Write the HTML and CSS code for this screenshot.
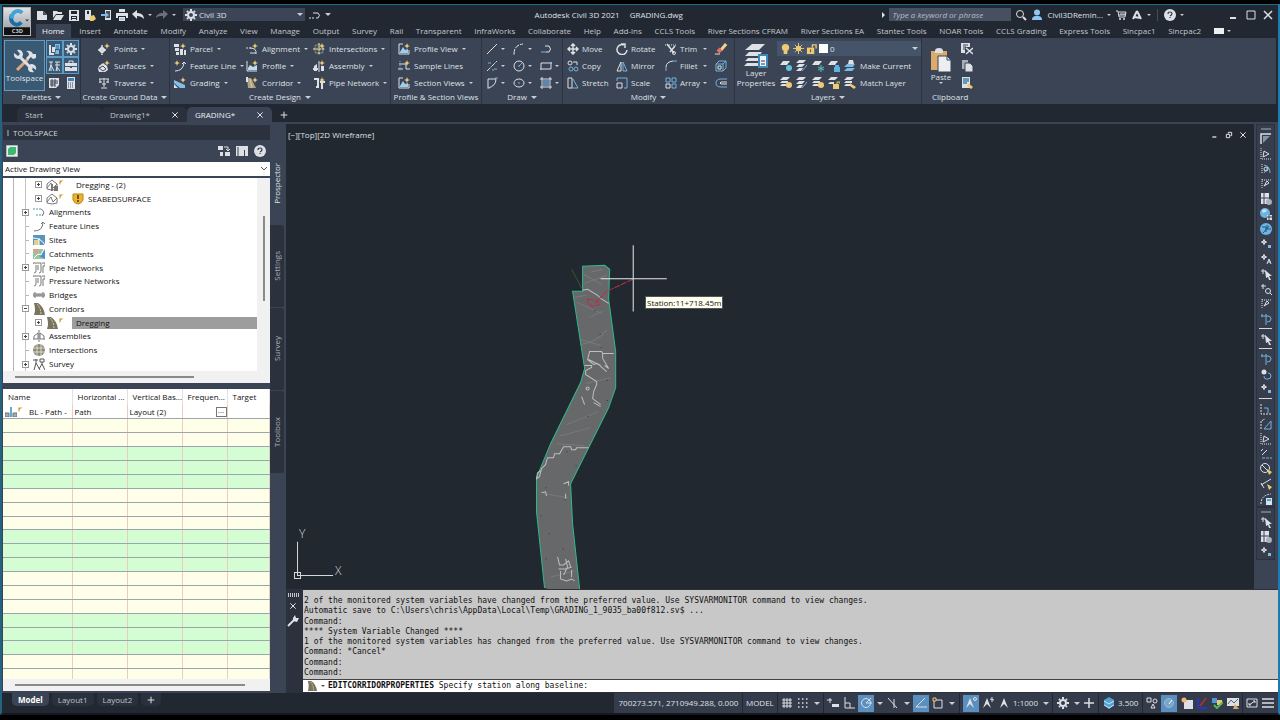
FILE: index.html
```html
<!DOCTYPE html>
<html lang="en">
<head>
    <meta charset="UTF-8">
    <title>Autodesk Civil 3D 2021 - GRADING.dwg</title>
    <link rel="stylesheet" href="styles.css">
</head>
<body>
<!-- icon sprite -->
<svg class="sprite" aria-hidden="true">
    <symbol id="new" viewBox="0 0 12 12"><path class="lt" d="M1 2h6l4 4v5H1z"/><path class="bg" d="M7 2v4h4z"/></symbol>
    <symbol id="open" viewBox="0 0 12 12"><path class="lt" d="M1 2h4l1 1h4v2H4L1 9z"/><path class="lt" d="M4 6h8l-3 5H1z"/></symbol>
    <symbol id="save" viewBox="0 0 12 12"><path class="lt" fill-rule="evenodd" d="M1 1h10v11H1zM3 2v3h6V2zM3 7v4h6V7z"/><path class="lt" d="M4 8h4v1H4zM4 10h4v1H4z"/></symbol>
    <symbol id="saveas" viewBox="0 0 12 12"><path class="lt" fill-rule="evenodd" d="M1 1h6v10H1zM3 2v3h2V2z"/><path class="yf" d="M6 7l4-1 2 4-3 2H6z"/></symbol>
    <symbol id="web" viewBox="0 0 12 12"><path class="lt" d="M5 1h6v10H5z"/><path class="bg" d="M6 2h4v7H6z"/><path class="bf" d="M1 5h4V3l4 3-4 3V7H1z"/></symbol>
    <symbol id="plot" viewBox="0 0 12 12"><path class="lt" d="M3 0h6v3H3zM0 4h12v5h-2V7H2v2H0zM3 8h6v4H3z"/><path class="bs" d="M4 10h4"/></symbol>
    <symbol id="undo" viewBox="0 0 12 12"><path class="lt" d="M0 5l5-4v3c4 0 7 2 7 6-2-2-4-3-7-3v3z"/></symbol>
    <symbol id="redo" viewBox="0 0 12 12"><path fill="#69707c" d="M12 5L7 1v3c-4 0-7 2-7 5 2-2 4-2 7-2v3z"/></symbol>
    <symbol id="gear" viewBox="0 0 12 12"><circle cx="6" cy="6" r="3" class="ls" stroke-width="2"/><path class="ls" stroke-width="2" d="M6 0v2M6 10v2M0 6h2M10 6h2M2 2l1 1M9 9l1 1M2 10l1-1M9 3l1-1"/></symbol>
    <symbol id="flow" viewBox="0 0 12 12"><path class="ls" stroke-dasharray="2 1" d="M0 9h6"/><path class="ls" d="M4 4h5q3 2 0 5H7"/></symbol>
    <symbol id="mag" viewBox="0 0 12 12"><circle cx="5" cy="5" r="3.500" class="ls"/><path class="ls" stroke-width="2" d="M8 8l3 3"/></symbol>
    <symbol id="user" viewBox="0 0 12 12"><circle cx="6" cy="3.500" r="3" fill="#8cc8f2"/><path fill="#8cc8f2" d="M1 11q0-4 4-4h2q4 0 4 4z"/></symbol>
    <symbol id="cart" viewBox="0 0 12 12"><path class="ls" d="M1 2h2l1 6h6l1-5H4M5 5h6M4 6h6"/><circle cx="5" cy="10" r="1" class="lt"/><circle cx="9" cy="10" r="1" class="lt"/></symbol>
    <symbol id="acad" viewBox="0 0 12 12"><path class="ls" stroke-width="2" d="M6 2L2 10M6 2l4 8M3 8l7 1"/></symbol>
    <symbol id="help" viewBox="0 0 12 12"><circle cx="6" cy="6" r="6" class="lt"/><path d="M4 5q0-2 2-2t2 1.500Q8 6 6 7M6 8v1" fill="none" stroke="#333b48" stroke-width="1.200"/></symbol>
    <symbol id="min" viewBox="0 0 12 12"><path class="ls" stroke-width="2" d="M2 9h6"/></symbol>
    <symbol id="max" viewBox="0 0 12 12"><path class="ls" d="M2 2h8v8H2z"/></symbol>
    <symbol id="restore" viewBox="0 0 12 12"><path class="ls" stroke-width="1.500" d="M5 4V2h5v5H8M2 5h5v5H2z"/></symbol>
    <symbol id="close" viewBox="0 0 12 12"><path class="ls" stroke-width="1.500" d="M2 2l8 8M10 2l-8 8"/></symbol>
    <symbol id="star" viewBox="0 0 12 12"><path fill="#f3d27c" d="M9 0l.8 2.200L12 3l-2.200.8L9 6l-.8-2.200L6 3l2.200-.8z"/></symbol>

    <symbol id="tools" viewBox="0 0 24 24"><path d="M4 21L15 10" stroke="#e2a77f" stroke-width="3"/><path class="ls" stroke-width="3" d="M7 8l12 12"/><path class="lt" d="M1 4l4 3 2-2-3-4q5-1 6 4 0 5-5 5-5-1-4-6zM23 21l-4-3-1 1 3 4q-5 1-6-3 0-5 4-5 5 1 4 6z"/><path class="lt" d="M13 2q5-1 7 3h3v4l-3 1-2-2-3 3-2-2 3-3q0-3-3-4z"/></symbol>
    <symbol id="prospector" viewBox="0 0 12 12"><path class="lt" d="M1 2h2v8h3v2H1zM4 4h3v5H4z"/><path class="bf" d="M7 1h5v5H7zM8 7h3v4H7z"/><path d="M8 3h3M8 5h3" stroke="#36607e"/></symbol>
    <symbol id="tripod" viewBox="0 0 12 12"><path class="ls" d="M1 2h4M3 2v3M3 5l-2 6M3 5l3 6M3 5v6M7 2h5M9 2v9M7 5h5M8 11l1-4 3 4"/></symbol>
    <symbol id="case" viewBox="0 0 12 12"><path class="ls" d="M4 3V1h4v2"/><path class="lt" d="M0 3h12v3H0zM0 7h5v1h2V7h5v4H0z"/></symbol>
    <symbol id="sheet" viewBox="0 0 12 12"><path class="lt" d="M1 1h10v7l-3 3H1z"/><path d="M2 4h8M2 6h8M2 8h5M4 2v8M7 2v8" stroke="#3b4454"/></symbol>
    <symbol id="calc" viewBox="0 0 12 12"><path class="lt" d="M2 0h8v12H2z"/><path fill="#3f83b4" d="M3 1h6v3H3z"/><path d="M3 6h6M3 8h6M3 10h6" stroke="#3b4454" stroke-dasharray="1 1"/></symbol>

    <symbol id="points" viewBox="0 0 12 12"><path class="ls" stroke-width="1.500" d="M4 4l3 3-3 3-3-3zM4 2v10M0 7h8"/><use href="#star"/></symbol>
    <symbol id="surfaces" viewBox="0 0 12 12"><path class="lt" d="M1 6l4-3 4 3 1 4-3 2H1L0 9z"/><path d="M1 8l4-2 3 3-3 2z" fill="none" stroke="#454c58"/><use href="#star"/></symbol>
    <symbol id="traverse" viewBox="0 0 12 12"><path class="ls" d="M1 2h10M6 1v9M3 11h6M2 2v4M10 2v4M1 5h3M8 5h3M4 7h4"/></symbol>
    <symbol id="parcel" viewBox="0 0 12 12"><path class="lt" d="M0 1h5v3H0zM1 5h4v3H1zM6 6h3v6H6zM10 7h2v5h-2zM2 9h3v3H2z"/><use href="#star"/></symbol>
    <symbol id="fline" viewBox="0 0 12 12"><path class="ls" d="M1 11q8 0 9-8M8 4l2-2 2 2"/><use href="#star" x="-6"/></symbol>
    <symbol id="grading" viewBox="0 0 12 12"><path class="lt" d="M0 7l4 4h-4z"/><path fill="#83bfe9" d="M0 3l11 5v3H6L0 6z"/><use href="#star"/></symbol>
    <symbol id="align" viewBox="0 0 12 12"><path class="ls" stroke-dasharray="2 1" d="M0 5h5"/><path class="ls" d="M4 5q7 0 6 6M4 10h6"/><use href="#star"/></symbol>
    <symbol id="profile" viewBox="0 0 12 12"><path class="ls" d="M1 1v10h10"/><path fill="#bcdcf0" d="M2 8l2-3 3 2 4-2v5H2z"/><use href="#star"/></symbol>
    <symbol id="corridor" viewBox="0 0 12 12"><path fill="#aaa28e" d="M1 1h4l5 10H2z"/><path d="M4 2l2 9" stroke="#e6d06b"/><path class="lt" d="M0 0h2v5H0z"/><use href="#star"/></symbol>
    <symbol id="inter" viewBox="0 0 12 12"><circle cx="6" cy="6" r="5.500" fill="#8f9185"/><path d="M4 0v12M8 0v12M0 4h12M0 8h12" stroke="#333a47"/><path d="M6 0v12M0 6h12" stroke="#ddd3a0" stroke-dasharray="2 1"/><use href="#star"/></symbol>
    <symbol id="assembly" viewBox="0 0 12 12"><path class="ls" d="M6 1v11"/><path class="lt" d="M1 6l3-2v7H1zM8 6h3v5H8zM0 8h5v2H0z"/><use href="#star"/></symbol>
    <symbol id="pipe" viewBox="0 0 12 12"><path class="ls" stroke-width="2" d="M1 2h4v8H3M9 5v7"/><path class="lt" d="M7 4h5v2H7z"/><use href="#star"/></symbol>
    <symbol id="pview" viewBox="0 0 12 12"><path class="ls" d="M1 1v10h10V7M1 1h4"/><path fill="#9fcdec" d="M2 9l3-5 2 3 3-1v4H2z"/><use href="#star"/></symbol>
    <symbol id="sample" viewBox="0 0 12 12"><path class="ls" d="M1 4h7v5h4M0 9h5"/><path class="bs" stroke-dasharray="1 1" d="M2 1v10"/><use href="#star"/></symbol>

    <symbol id="line" viewBox="0 0 12 12"><path class="ls" d="M1 11L11 1"/></symbol>
    <symbol id="arc" viewBox="0 0 12 12"><path class="ls" stroke-dasharray="5 1" d="M1 11Q1 2 10 1"/><path class="bs" d="M1 10v2"/></symbol>
    <symbol id="pline" viewBox="0 0 12 12"><path class="ls" d="M5 3h4q3 3 0 6H6"/><path class="bs" d="M1 9h5"/></symbol>
    <symbol id="xline" viewBox="0 0 12 12"><path class="ls" stroke-dasharray="5 1" d="M1 11L11 1"/><path class="bs" d="M2 3h3M8 9h3M6 10h2"/></symbol>
    <symbol id="circle" viewBox="0 0 12 12"><circle class="ls" cx="6" cy="6" r="5"/><path class="bs" d="M6 6l3-3M5 6h2"/></symbol>
    <symbol id="rect" viewBox="0 0 12 12"><path class="ls" d="M1 3h10v6H1z"/><path class="bf" d="M0 8h2v2H0zM10 2h2v2h-2z"/></symbol>
    <symbol id="spline" viewBox="0 0 12 12"><path class="ls" d="M2 11V2h8Q10 9 2 11"/><path class="bs" d="M9 1h3M1 11h3"/></symbol>
    <symbol id="ellipse" viewBox="0 0 12 12"><ellipse class="ls" cx="6" cy="6" rx="5" ry="4"/><path class="bs" d="M5 6h2"/></symbol>
    <symbol id="hatch" viewBox="0 0 12 12"><path class="ls" d="M2 0v12M10 0v12M0 2h12M0 10h12"/><path fill="#5d87ab" d="M3 3h6v6H3z"/></symbol>
    <symbol id="move" viewBox="0 0 12 12"><path class="ls" stroke-width="1.500" d="M6 1v10M1 6h10M4 3l2-2 2 2M4 9l2 2 2-2M3 4L1 6l2 2M9 4l2 2-2 2"/></symbol>
    <symbol id="copy" viewBox="0 0 12 12"><circle class="ls" cx="3" cy="3" r="2"/><path class="ls" d="M6 2h4v3"/><circle class="bs" cx="4" cy="9" r="2"/><circle class="bs" cx="9" cy="9" r="2"/></symbol>
    <symbol id="stretch" viewBox="0 0 12 12"><path class="ls" d="M1 1h4v10H1z"/><path class="bs" d="M6 2l5 9H5"/></symbol>
    <symbol id="rotate" viewBox="0 0 12 12"><path class="ls" stroke-width="1.500" d="M8 2a5 5 0 1 0 3 5M5 1h4v4"/></symbol>
    <symbol id="mirror" viewBox="0 0 12 12"><path class="ls" d="M5 2v9H1z"/><path class="bs" d="M7 2v9h4z"/></symbol>
    <symbol id="scale" viewBox="0 0 12 12"><path class="ls" d="M1 11V6h5v5z"/><path class="bs" d="M1 4V1h10v10H8"/></symbol>
    <symbol id="trim" viewBox="0 0 12 12"><path class="ls" stroke-width="1.500" d="M2 1l7 9M10 3L5 9"/><circle class="ls" cx="9" cy="10" r="1.500"/><path class="ls" stroke-dasharray="1 1" d="M0 2h12"/></symbol>
    <symbol id="fillet" viewBox="0 0 12 12"><path class="bs" d="M1 11V7"/><path class="ls" d="M1 7q0-5 7-6"/><path class="bs" d="M8 1h4"/></symbol>
    <symbol id="array" viewBox="0 0 12 12"><path class="bs" d="M1 1h4v4H1zM7 1h4v4H7zM7 7h4v4H7z"/><path class="ls" d="M1 7h4v4H1z"/></symbol>
    <symbol id="erase" viewBox="0 0 12 12"><path d="M11 1L6 7" stroke="#f0d08a" stroke-width="3"/><path d="M6 6L3 9" stroke="#e37060" stroke-width="4"/><path class="ls" d="M0 11h5"/></symbol>
    <symbol id="explode" viewBox="0 0 12 12"><path class="bs" d="M1 4h7v7H1zM1 4l3-3h7v7l-3 3M8 4l3-3"/><path class="ls" d="M3 6h3v3H3z"/></symbol>
    <symbol id="offset" viewBox="0 0 12 12"><path class="bs" d="M12 2H6Q1 2 1 6t5 4h6"/><path class="ls" d="M12 5H6q-2 1 0 2h6"/></symbol>

    <symbol id="layers" viewBox="0 0 24 24"><path class="lt" d="M8 0h13l-6 6H1z"/><path class="lt" d="M5 8h13l-3 4H1zM4 14h10v3H1z"/><path class="lt" d="M3 19h11v3H0z"/><path fill="#eef5fa" stroke="#3d86b9" stroke-width="2" d="M15 11h8v12h-8z"/><path d="M17 17h4M17 20h4" stroke="#333b48"/></symbol>
    <symbol id="bulb" viewBox="0 0 12 12"><circle cx="6" cy="5" r="4" class="yf"/><path class="yf" d="M4 8h4v4H4z"/></symbol>
    <symbol id="sun" viewBox="0 0 12 12"><circle cx="6" cy="6" r="3" class="yf"/><path d="M6 0v12M0 6h12M2 2l8 8M10 2l-8 8" stroke="#efc872"/></symbol>
    <symbol id="lock" viewBox="0 0 12 12"><path class="yf" d="M1 5h8v7H1z"/><path d="M7 5V2h4v4" fill="none" stroke="#efc872" stroke-width="1.500"/><path d="M5 7v3" stroke="#3b4454"/></symbol>
    <symbol id="l1" viewBox="0 0 12 12"><path class="lt" d="M3 1h7L7 5H0z"/><circle cx="9" cy="8" r="3" fill="#63c3dd"/></symbol>
    <symbol id="l2" viewBox="0 0 12 12"><path class="lt" d="M3 0h7L7 3H0zM3 4h6L6 7H0zM3 8h4l-2 3H0z"/><path class="bs" d="M6 11l5-6"/></symbol>
    <symbol id="l3" viewBox="0 0 12 12"><path class="lt" d="M3 1h7L7 5H0z"/><path d="M9 5v7M6 7l6 3M12 7l-6 3" stroke="#52c7c0"/></symbol>
    <symbol id="l4" viewBox="0 0 12 12"><path class="lt" d="M3 1h7L7 5H0z"/><path fill="#5cb3e4" d="M6 7h6v5H6zM7 5h4v2H7z"/></symbol>
    <symbol id="l5" viewBox="0 0 12 12"><path class="lt" d="M3 0h7L7 3H0zM2 4h6v2H0zM2 7h5v2H0z"/><circle cx="9" cy="8" r="3" class="yf"/></symbol>
    <symbol id="l6" viewBox="0 0 12 12"><path class="lt" d="M3 0h7L7 3H0zM2 5h4v2H0z"/><path class="yf" d="M5 7h6v5H5z"/><path d="M9 7V5h3v2" fill="none" stroke="#efc872"/></symbol>
    <symbol id="mkcur" viewBox="0 0 12 12"><path class="bf" d="M3 4h8l-2 3H0zM3 8h8l-3 3H0z"/><path class="lt" d="M5 0h4l1 4H4z"/></symbol>
    <symbol id="match" viewBox="0 0 12 12"><path class="lt" d="M3 0h7L7 3H0zM2 4h6v2H0zM2 7h4v2H0z"/><path class="yf" d="M6 6l6 4-2 2-4-3z"/></symbol>
    <symbol id="paste" viewBox="0 0 24 24"><path fill="#d9ac69" d="M2 3h16v19H2z"/><path class="lt" d="M6 3q0-3 4-3t4 3v2H6z"/><path fill="#eceef1" stroke="#3b4454" d="M9 8h9l4 4v12H9z"/><path d="M18 8v4h4" fill="none" stroke="#3b4454"/></symbol>
    <symbol id="cut" viewBox="0 0 12 12"><path class="lt" d="M0 0h9v4H4v6H0z"/><path d="M2 2h5M2 4h3M2 6h2" stroke="#3b4454"/><path class="ls" stroke-width="1.500" d="M5 5l7 6M12 5l-7 6"/></symbol>
    <symbol id="dup" viewBox="0 0 12 12"><path fill="#a9afb9" d="M1 0h6v9H1z"/><path class="lt" stroke="#3b4454" d="M4 3h5l3 3v6H4z"/></symbol>
    <symbol id="pspec" viewBox="0 0 12 12"><path class="lt" d="M1 0h8v11H1z"/><path d="M2 2h6M2 4h6M2 6h4" stroke="#3f7faf" stroke-width="1.500"/><path fill="#efc872" d="M7 6l5 4-2 2-4-3z"/></symbol>

    <symbol id="cube" viewBox="0 0 12 12"><path fill="#e8ebee" stroke="#7c8792" d="M0 0h12v12H0z"/><path fill="#3fb871" d="M2 4l2-2h6v6L8 10H2z"/></symbol>
    <symbol id="swap" viewBox="0 0 12 12"><path class="lt" d="M0 1h5v4H0zM7 7h5v4H7zM2 7h3v4H2z"/><path class="ls" d="M6 2h4v3M8 4l2 2 2-2"/></symbol>
    <symbol id="pane" viewBox="0 0 12 12"><path class="lt" d="M0 1h12v10H9V5H8v6H0z"/><path d="M2 2v9" stroke="#3b4454"/></symbol>
    <symbol id="t-surf" viewBox="0 0 12 12"><path class="ds" d="M1 5l5-4 5 4v5q-5 2-10 0zM1 9l4-5 2 5 4-4"/></symbol>
    <symbol id="t-surf2" viewBox="0 0 12 12"><use href="#t-surf"/><path class="dk" d="M5 5h2v7H5zM8 7h4v5H8z"/></symbol>
    <symbol id="flag" viewBox="0 0 12 12"><path fill="#d9992b" d="M1 1h10L5 5 3 11H1z"/></symbol>
    <symbol id="shield" viewBox="0 0 12 12"><path fill="#edb52d" stroke="#b98415" d="M1 1h10v6q-2 4-5 4T1 7z"/><path d="M6 2v4M6 7v2" stroke="#4b3405" stroke-width="1.500"/></symbol>
    <symbol id="t-align" viewBox="0 0 12 12"><path fill="none" stroke="#4d9aa8" stroke-dasharray="2 1" d="M0 3h9M3 9h7"/><path class="ds" d="M8 3q5 3 1 7"/></symbol>
    <symbol id="t-fl" viewBox="0 0 12 12"><path class="ds" d="M1 11q9 0 9-9M8 4l2-2 2 2"/></symbol>
    <symbol id="t-site" viewBox="0 0 12 12"><path fill="#5795bb" d="M0 1h12v10H0z"/><path fill="#e8ce8b" d="M1 6h5v5H1z"/><path d="M0 4q8 0 12 7M6 4v8" fill="none" stroke="#fff"/></symbol>
    <symbol id="t-catch" viewBox="0 0 12 12"><path fill="#9ac4a1" d="M0 1h12v10H0z"/><path fill="#e39d78" d="M0 1h5v6z"/><path fill="#4792c8" d="M12 2L6 8l6 3z"/><path d="M1 10l4-4 3 1 3-6" fill="none" stroke="#fff"/></symbol>
    <symbol id="t-pipe" viewBox="0 0 12 12"><path class="ds" d="M0 2V1h8v8q0 2-2 2M3 3v6q0 2-2 2M5 3v5M9 1h3v3h-2v7"/></symbol>
    <symbol id="t-bridge" viewBox="0 0 12 12"><path class="ds" d="M0 6h12M1 4v4h2V4zM5 4v4M7 4v4M9 4v4h2V4z"/></symbol>
    <symbol id="t-corr" viewBox="0 0 12 12"><path fill="#777465" d="M1 0h4q6 4 7 12H1q2-5 0-12z"/><path d="M4 1q4 4 4 11" fill="none" stroke="#e8d36a" stroke-dasharray="2 1"/></symbol>
    <symbol id="t-asm" viewBox="0 0 12 12"><path class="ds" d="M6 0v12M0 9h5V3L1 6v3M12 9H7V3l4 3v3"/></symbol>
    <symbol id="t-int" viewBox="0 0 12 12"><circle cx="6" cy="6" r="6" fill="#8b897a"/><path d="M4 0v12M8 0v12M0 4h12M0 8h12" stroke="#dcd9c8"/></symbol>
    <symbol id="t-sur" viewBox="0 0 12 12"><path fill="none" stroke="#555" d="M0 2h5M3 1v4M3 5l-2 7M3 5l4 7M7 1h4v3H7zM9 4v3M9 6l-3 5M9 6l3 6"/></symbol>
    <symbol id="t-base" viewBox="0 0 12 12"><path d="M6 0v12" stroke="#69a6d0" stroke-width="2"/><path fill="#a5adb5" stroke="#68727c" d="M0 7h4v4H0zM8 7h4v4H8z"/></symbol>

    <symbol id="wrench" viewBox="0 0 12 12"><path class="ls" stroke-width="2" d="M1 11l6-6"/><path class="lt" d="M6 3l2-3 1 3 3 0-2 4-4-1z"/></symbol>
    <symbol id="v1" viewBox="0 0 12 12"><path class="ls" stroke-width="1.500" d="M1 11V1h10"/><path fill="#7f98b0" d="M3 3h7L3 10z"/></symbol>
    <symbol id="v2" viewBox="0 0 12 12"><path class="ls" stroke-dasharray="1 1" d="M1 0v11h11"/><path class="ls" d="M3 9l1-6 5 3z"/></symbol>
    <symbol id="v3" viewBox="0 0 12 12"><path class="ls" stroke-dasharray="1 1" d="M2 1v10"/><path class="bs" d="M4 2q6 1 6 8M4 10l4-6"/><circle class="ls" cx="6" cy="6" r="2"/></symbol>
    <symbol id="v4" viewBox="0 0 12 12"><path class="ls" stroke-dasharray="1 1" d="M2 1v10M2 2h9"/><path class="ls" d="M4 8l3-5 2 2z"/></symbol>
    <symbol id="v5" viewBox="0 0 12 12"><path class="lt" d="M1 0h8v11H1z"/><path d="M4 0v11M1 5h8" stroke="#3b4454"/><circle cx="9" cy="9" r="3" fill="#aab1ba"/></symbol>
    <symbol id="v6" viewBox="0 0 12 12"><circle cx="5" cy="5" r="5" fill="#6bb5e4"/><path class="lt" d="M2 2q4-2 5 1L3 5zM7 7h5v5H7z"/><path d="M9 7v5M7 9h5" stroke="#3b4454"/></symbol>
    <symbol id="v7" viewBox="0 0 12 12"><circle cx="6" cy="6" r="6" fill="#6bb5e4"/><path fill="none" stroke="#24547a" d="M2 4h4v5M7 2v4h4M3 10l6-7"/></symbol>
    <symbol id="v8" viewBox="0 0 12 12"><path class="ls" d="M4 1v6M1 4h6M2 4l2-2 2 2-2 2z"/><path class="bf" d="M8 7h3v3H8z"/></symbol>
    <symbol id="v9" viewBox="0 0 12 12"><path class="ls" d="M4 1v6M1 4h6M2 4l2-2 2 2-2 2zM7 11l2-5 2 5M8 9h3"/></symbol>
    <symbol id="v10" viewBox="0 0 12 12"><path class="ls" d="M3 1v5M1 3h5"/><path class="lt" d="M5 2l7 6H9l2 4h-2l-1-3-2 1z"/></symbol>
    <symbol id="v11" viewBox="0 0 12 12"><path class="ls" d="M3 1v5M1 3h5M10 10l2 2"/><circle class="ls" cx="8" cy="8" r="2.500"/></symbol>
    <symbol id="v12" viewBox="0 0 12 12"><path class="bs" d="M1 3h7q3 0 3 3t-4 3M6 1v11M2 1v3"/></symbol>
    <symbol id="v13" viewBox="0 0 12 12"><path class="ls" stroke-dasharray="2 1" d="M1 1v10h11"/><path class="bs" d="M4 5h4v5"/></symbol>
    <symbol id="v14" viewBox="0 0 12 12"><path class="ls" stroke-dasharray="2 1" d="M1 11V3l4-2"/><path class="bs" d="M4 11l7-8v8z"/></symbol>
    <symbol id="v15" viewBox="0 0 12 12"><path class="ls" d="M2 7l5-5M1 3l2-2"/><path class="bs" stroke-dasharray="3 1" d="M2 10h10"/></symbol>
    <symbol id="v16" viewBox="0 0 12 12"><circle class="ls" cx="5" cy="5" r="4.500"/><path class="ls" d="M2 2l6 6"/><path class="yf" d="M7 6l5 3-3 3z"/></symbol>
    <symbol id="v17" viewBox="0 0 12 12"><path class="ls" d="M1 7l10-6M1 5l3 5"/><path class="yf" d="M7 6l5 3-3 3z"/></symbol>
    <symbol id="v18" viewBox="0 0 12 12"><path class="ls" stroke-dasharray="2 1" d="M1 11Q1 2 11 1"/><path fill="#cfe5f4" d="M6 5h6v7H6z"/><path fill="#5b9ecb" d="M7 6h4v2H7z"/></symbol>
    <symbol id="v19" viewBox="0 0 12 12"><path class="bs" d="M8 5q3 0 3 3t-3 3H6q-2 0-2-3"/><circle class="lt" cx="4" cy="4" r="2.500"/></symbol>

    <symbol id="grid" viewBox="0 0 12 12"><path class="ls" d="M3 1v10M6 1v10M9 1v10M1 3h10M1 6h10M1 9h10"/></symbol>
    <symbol id="snap" viewBox="0 0 12 12"><path class="ls" stroke-width="1.500" stroke-dasharray="1.500 2.500" d="M1 2h11M1 6h11M1 10h11"/></symbol>
    <symbol id="dyn" viewBox="0 0 12 12"><path class="ls" d="M0 3h5M3 1v5"/><path class="lt" d="M5 7h7v3H5z"/></symbol>
    <symbol id="ortho" viewBox="0 0 12 12"><path class="ls" d="M2 0v11h10M2 6h5v5"/></symbol>
    <symbol id="polar" viewBox="0 0 12 12"><circle class="ls" cx="6" cy="6" r="4.500"/><path class="ls" d="M6 6h6M6 6l5-5"/></symbol>
    <symbol id="iso" viewBox="0 0 12 12"><path class="ls" d="M1 1l9 10M7 2v9"/></symbol>
    <symbol id="track" viewBox="0 0 12 12"><path class="ls" d="M1 10L10 1M1 10h11"/></symbol>
    <symbol id="osnap" viewBox="0 0 12 12"><path class="ls" d="M2 3h8v8H2z"/><path fill="#323947" stroke="#efc872" d="M1 1h3v3H1z"/></symbol>
    <symbol id="ann" viewBox="0 0 12 12"><path class="lt" d="M6 1l4 10-3-3-1-1-1 1-3 3z"/></symbol>
    <symbol id="ann2" viewBox="0 0 12 12"><use href="#ann" x="-1"/><circle class="ls" cx="10" cy="2" r="1.500"/></symbol>
    <symbol id="ann3" viewBox="0 0 12 12"><use href="#ann" x="-1"/><path class="ls" d="M10 0v5M8 2l4 1"/></symbol>
    <symbol id="plus" viewBox="0 0 12 12"><path class="ls" stroke-width="1.500" d="M6 1v10M1 6h10"/></symbol>
    <symbol id="elev" viewBox="0 0 12 12"><path fill="#4fa4d6" d="M1 3l5-3 5 3v5l-5 4-5-4z"/><path class="ls" d="M1 4l5 3 5-3M1 8l5 3 5-3"/></symbol>
    <symbol id="shapes" viewBox="0 0 12 12"><path class="ls" d="M1 1h4v4H1zM5 11l2-4 2 4z"/><circle class="ls" cx="9" cy="4" r="2"/></symbol>
    <symbol id="perf" viewBox="0 0 12 12"><circle cx="6" cy="6" r="4.500" fill="#76a6cd" stroke="#a6b6c6"/><path d="M6 7l3-4" stroke="#fff"/></symbol>
    <symbol id="s1" viewBox="0 0 12 12"><path class="lt" d="M3 3h9v9H3z"/><circle cx="3" cy="3" r="2.500" fill="#f1b96c"/></symbol>
    <symbol id="s2" viewBox="0 0 12 12"><path d="M2 1v10M2 11h9" stroke="#2638c2" stroke-width="2"/><path d="M4 9l6-8" stroke="#a53036" stroke-width="2"/></symbol>
    <symbol id="s3" viewBox="0 0 12 12"><path fill="#4d97d4" d="M1 1h5v5H1z"/><path class="yf" d="M6 3h5v5H6z"/><path d="M3 8l3 3 6-6" fill="none" stroke="#50b85f" stroke-width="2"/></symbol>
    <symbol id="s4" viewBox="0 0 12 12"><path class="lt" d="M0 1h12v8H0z"/><path d="M1 7l3-4 3 3 4-4" stroke="#59616e" fill="none"/><path fill="#dcab65" d="M8 7l4 5H6z"/></symbol>
    <symbol id="full" viewBox="0 0 12 12"><path class="ls" d="M1 2h10v8H1zM3 8l6-4M7 4h2v2M3 6v2h2"/></symbol>
    <symbol id="menu" viewBox="0 0 12 12"><path class="ls" stroke-width="1.500" d="M0 2h12M0 6h12M0 10h12"/></symbol>
</svg>

<div class="app">
    <header class="top">
        <button class="logo" aria-label="Application menu">
            <svg viewBox="0 0 27 28">
                <path fill="none" stroke="#1b6da6" stroke-width="4" d="M18 15q-4 4-8 1-4-3-2-9"/>
                <path fill="none" stroke="#3fa3dc" stroke-width="4" d="M19 5q-5-4-9 0-2 2-2 6"/>
                <path fill="#111" d="M0 20h27v8H0z"/>
                <path fill="#333" d="M22 12h4l-2 2z"/>
                <text x="8" y="26" font-size="6" font-weight="700" fill="#c9cdd2">C3D</text>
            </svg>
        </button>
        <div class="top_rows">
            <div class="titlebar">
                <div class="qat">
                    <button aria-label="New"><svg class="ic"><use href="#new"/></svg></button>
                    <button aria-label="Open"><svg class="ic"><use href="#open"/></svg></button>
                    <button aria-label="Save"><svg class="ic"><use href="#save"/></svg></button>
                    <button aria-label="Save as"><svg class="ic"><use href="#saveas"/></svg></button>
                    <button aria-label="Open from web"><svg class="ic"><use href="#web"/></svg></button>
                    <button aria-label="Plot"><svg class="ic"><use href="#plot"/></svg></button>
                    <button class="drop" aria-label="Undo"><svg class="ic"><use href="#undo"/></svg><i class="caret"></i></button>
                    <button class="drop" aria-label="Redo"><svg class="ic"><use href="#redo"/></svg><i class="caret"></i></button>
                </div>
                <label class="workspace"><svg class="ic"><use href="#gear"/></svg><select aria-label="Workspace"><option>Civil 3D</option></select><i class="caret big"></i></label>
                <button class="drop" aria-label="Customize"><svg class="ic"><use href="#flow"/></svg><i class="caret big"></i></button>
                <h1 class="title"><span>Autodesk Civil 3D 2021</span><span>GRADING.dwg</span></h1>
                <div class="infocenter">
                    <i class="caret_right"></i>
                    <input class="search" type="text" aria-label="Search" placeholder="Type a keyword or phrase">
                    <button aria-label="Search"><svg class="ic"><use href="#mag"/></svg></button>
                    <button class="drop user"><svg class="ic"><use href="#user"/></svg>Civil3DRemin...<i class="caret"></i></button>
                    <button aria-label="Store"><svg class="ic"><use href="#cart"/></svg></button>
                    <button class="drop" aria-label="Apps"><svg class="ic"><use href="#acad"/></svg><i class="caret"></i></button>
                    <i class="bar"></i>
                    <button class="drop" aria-label="Help"><svg class="ic"><use href="#help"/></svg><i class="caret"></i></button>
                </div>
                <div class="winbtns">
                    <button aria-label="Minimize"><svg class="ic"><use href="#min"/></svg></button>
                    <button aria-label="Maximize"><svg class="ic"><use href="#max"/></svg></button>
                    <button aria-label="Close"><svg class="ic"><use href="#close"/></svg></button>
                </div>
            </div>
            <nav class="menu">
                <button class="on">Home</button>
                <button>Insert</button>
                <button>Annotate</button>
                <button>Modify</button>
                <button>Analyze</button>
                <button>View</button>
                <button>Manage</button>
                <button>Output</button>
                <button>Survey</button>
                <button>Rail</button>
                <button>Transparent</button>
                <button>InfraWorks</button>
                <button>Collaborate</button>
                <button>Help</button>
                <button>Add-ins</button>
                <button>CCLS Tools</button>
                <button>River Sections CFRAM</button>
                <button>River Sections EA</button>
                <button>Stantec Tools</button>
                <button>NOAR Tools</button>
                <button>CCLS Grading</button>
                <button>Express Tools</button>
                <button>Sincpac1</button>
                <button>Sincpac2</button>
                <button class="collapse" aria-label="Minimize ribbon"><i class="chip"></i><i class="caret"></i></button>
            </nav>
        </div>
    </header>

    <section class="ribbon">
        <div class="panel palettes">
            <div class="tools">
                <button class="large lit"><svg class="ic24"><use href="#tools"/></svg>Toolspace</button>
                <div class="pal_grid">
                    <button class="lit" aria-label="Prospector"><svg class="ic"><use href="#prospector"/></svg></button>
                    <button class="lit" aria-label="Settings"><svg class="ic"><use href="#gear"/></svg></button>
                    <button class="lit" aria-label="Survey"><svg class="ic"><use href="#tripod"/></svg></button>
                    <button class="lit" aria-label="Toolbox"><svg class="ic"><use href="#case"/></svg></button>
                    <button aria-label="Panorama"><svg class="ic"><use href="#sheet"/></svg></button>
                    <button aria-label="Calculator"><svg class="ic"><use href="#calc"/></svg></button>
                </div>
            </div>
            <h2>Palettes<i class="caret big"></i></h2>
        </div>
        <div class="panel ground">
            <div class="tools">
                <div class="col">
                    <button><svg class="ic"><use href="#points"/></svg>Points<i class="caret"></i></button>
                    <button><svg class="ic"><use href="#surfaces"/></svg>Surfaces<i class="caret"></i></button>
                    <button><svg class="ic"><use href="#traverse"/></svg>Traverse<i class="caret"></i></button>
                </div>
            </div>
            <h2>Create Ground Data<i class="caret big"></i></h2>
        </div>
        <div class="panel design">
            <div class="tools">
                <div class="col">
                    <button><svg class="ic"><use href="#parcel"/></svg>Parcel<i class="caret"></i></button>
                    <button><svg class="ic"><use href="#fline"/></svg>Feature Line<i class="caret"></i></button>
                    <button><svg class="ic"><use href="#grading"/></svg>Grading<i class="caret"></i></button>
                </div>
                <div class="col">
                    <button><svg class="ic"><use href="#align"/></svg>Alignment<i class="caret"></i></button>
                    <button><svg class="ic"><use href="#profile"/></svg>Profile<i class="caret"></i></button>
                    <button><svg class="ic"><use href="#corridor"/></svg>Corridor<i class="caret"></i></button>
                </div>
                <div class="col">
                    <button><svg class="ic"><use href="#inter"/></svg>Intersections<i class="caret"></i></button>
                    <button><svg class="ic"><use href="#assembly"/></svg>Assembly<i class="caret"></i></button>
                    <button><svg class="ic"><use href="#pipe"/></svg>Pipe Network<i class="caret"></i></button>
                </div>
            </div>
            <h2>Create Design<i class="caret big"></i></h2>
        </div>
        <div class="panel views">
            <div class="tools">
                <div class="col">
                    <button><svg class="ic"><use href="#pview"/></svg>Profile View<i class="caret"></i></button>
                    <button><svg class="ic"><use href="#sample"/></svg>Sample Lines</button>
                    <button><svg class="ic"><use href="#pview"/></svg>Section Views<i class="caret"></i></button>
                </div>
            </div>
            <h2>Profile &amp; Section Views</h2>
        </div>
        <div class="panel draw">
            <div class="tools">
                <button aria-label="Line"><svg class="ic"><use href="#line"/></svg><i class="caret"></i></button>
                <button aria-label="Arc"><svg class="ic"><use href="#arc"/></svg><i class="caret"></i></button>
                <button aria-label="Polyline"><svg class="ic"><use href="#pline"/></svg></button>
                <button aria-label="Construction line"><svg class="ic"><use href="#xline"/></svg><i class="caret"></i></button>
                <button aria-label="Circle"><svg class="ic"><use href="#circle"/></svg><i class="caret"></i></button>
                <button aria-label="Rectangle"><svg class="ic"><use href="#rect"/></svg><i class="caret"></i></button>
                <button aria-label="Spline"><svg class="ic"><use href="#spline"/></svg><i class="caret"></i></button>
                <button aria-label="Ellipse"><svg class="ic"><use href="#ellipse"/></svg><i class="caret"></i></button>
                <button aria-label="Hatch"><svg class="ic"><use href="#hatch"/></svg><i class="caret"></i></button>
            </div>
            <h2>Draw<i class="caret big"></i></h2>
        </div>
        <div class="panel modify">
            <div class="tools">
                <div class="col">
                    <button><svg class="ic"><use href="#move"/></svg>Move</button>
                    <button><svg class="ic"><use href="#copy"/></svg>Copy</button>
                    <button><svg class="ic"><use href="#stretch"/></svg>Stretch</button>
                </div>
                <div class="col">
                    <button><svg class="ic"><use href="#rotate"/></svg>Rotate</button>
                    <button><svg class="ic"><use href="#mirror"/></svg>Mirror</button>
                    <button><svg class="ic"><use href="#scale"/></svg>Scale</button>
                </div>
                <div class="col wide">
                    <button><svg class="ic"><use href="#trim"/></svg>Trim<i class="caret"></i></button>
                    <button><svg class="ic"><use href="#fillet"/></svg>Fillet<i class="caret"></i></button>
                    <button><svg class="ic"><use href="#array"/></svg>Array<i class="caret"></i></button>
                </div>
                <div class="col">
                    <button aria-label="Erase"><svg class="ic"><use href="#erase"/></svg></button>
                    <button aria-label="Explode"><svg class="ic"><use href="#explode"/></svg></button>
                    <button aria-label="Offset"><svg class="ic"><use href="#offset"/></svg></button>
                </div>
            </div>
            <h2>Modify<i class="caret big"></i></h2>
        </div>
        <div class="panel layers">
            <div class="tools">
                <button class="large"><svg class="ic24"><use href="#layers"/></svg>Layer<br>Properties</button>
                <div class="layer_rows">
                    <label class="layer_combo">
                        <svg class="ic"><use href="#bulb"/></svg><svg class="ic"><use href="#sun"/></svg><svg class="ic"><use href="#lock"/></svg><i class="swatch"></i>
                        <select aria-label="Layer"><option>0</option></select><i class="caret big"></i>
                    </label>
                    <div class="layer_row">
                        <button aria-label="Off"><svg class="ic"><use href="#l1"/></svg></button>
                        <button aria-label="Isolate"><svg class="ic"><use href="#l2"/></svg></button>
                        <button aria-label="Freeze"><svg class="ic"><use href="#l3"/></svg></button>
                        <button aria-label="Lock"><svg class="ic"><use href="#l4"/></svg></button>
                        <button><svg class="ic"><use href="#mkcur"/></svg>Make Current</button>
                    </div>
                    <div class="layer_row">
                        <button aria-label="On"><svg class="ic"><use href="#l5"/></svg></button>
                        <button aria-label="Unisolate"><svg class="ic"><use href="#l2"/></svg></button>
                        <button aria-label="Thaw"><svg class="ic"><use href="#l5"/></svg></button>
                        <button aria-label="Unlock"><svg class="ic"><use href="#l6"/></svg></button>
                        <button><svg class="ic"><use href="#match"/></svg>Match Layer</button>
                    </div>
                </div>
            </div>
            <h2>Layers<i class="caret big"></i></h2>
        </div>
        <div class="panel clipboard">
            <div class="tools">
                <button class="large"><svg class="ic24"><use href="#paste"/></svg>Paste<i class="caret"></i></button>
                <div class="col">
                    <button aria-label="Cut"><svg class="ic"><use href="#cut"/></svg></button>
                    <button aria-label="Copy clip"><svg class="ic"><use href="#dup"/></svg></button>
                    <button aria-label="Paste special"><svg class="ic"><use href="#pspec"/></svg></button>
                </div>
            </div>
            <h2>Clipboard</h2>
        </div>
    </section>

    <nav class="files">
        <button class="file">Start</button>
        <button class="file">Drawing1*<svg class="ic8"><use href="#close"/></svg></button>
        <button class="file on">GRADING*<svg class="ic8"><use href="#close"/></svg></button>
        <button class="add" aria-label="New drawing"><svg class="ic8"><use href="#plus"/></svg></button>
    </nav>

    <main class="work">
        <aside class="toolspace">
            <div class="ts_main">
                <h2 class="ts_title"><i class="grip"></i>TOOLSPACE</h2>
                <div class="ts_bar">
                    <button aria-label="Item preview"><svg class="ic"><use href="#cube"/></svg></button>
                    <span class="grow"></span>
                    <button aria-label="Preview area"><svg class="ic"><use href="#swap"/></svg></button>
                    <button aria-label="Panorama display"><svg class="ic"><use href="#pane"/></svg></button>
                    <button aria-label="Help"><svg class="ic"><use href="#help"/></svg></button>
                </div>
                <label class="view_sel"><select aria-label="View"><option>Active Drawing View</option></select><svg viewBox="0 0 8 8"><path d="M1 2l3 3 3-3" fill="none" stroke="#555"/></svg></label>
                <div class="tree_box">
                    <ul class="tree">
                        <li class="sub"><em class="plus"></em><svg class="ic"><use href="#t-surf2"/></svg><svg class="fl"><use href="#flag"/></svg><span>Dregging - (2)</span></li>
                        <li class="sub"><em class="plus"></em><svg class="ic"><use href="#t-surf"/></svg><svg class="fl"><use href="#flag"/></svg><svg class="ic"><use href="#shield"/></svg><span>SEABEDSURFACE</span></li>
                        <li><em class="plus"></em><svg class="ic"><use href="#t-align"/></svg><span>Alignments</span></li>
                        <li><em></em><svg class="ic"><use href="#t-fl"/></svg><span>Feature Lines</span></li>
                        <li><em></em><svg class="ic"><use href="#t-site"/></svg><span>Sites</span></li>
                        <li><em></em><svg class="ic"><use href="#t-catch"/></svg><span>Catchments</span></li>
                        <li><em class="plus"></em><svg class="ic"><use href="#t-pipe"/></svg><span>Pipe Networks</span></li>
                        <li><em></em><svg class="ic"><use href="#t-pipe"/></svg><span>Pressure Networks</span></li>
                        <li><em></em><svg class="ic"><use href="#t-bridge"/></svg><span>Bridges</span></li>
                        <li><em class="minus"></em><svg class="ic"><use href="#t-corr"/></svg><span>Corridors</span></li>
                        <li class="sub"><em class="plus"></em><svg class="ic"><use href="#t-corr"/></svg><svg class="fl"><use href="#flag"/></svg><span class="sel">Dregging</span></li>
                        <li><em class="plus"></em><svg class="ic"><use href="#t-asm"/></svg><span>Assemblies</span></li>
                        <li><em></em><svg class="ic"><use href="#t-int"/></svg><span>Intersections</span></li>
                        <li><em class="plus"></em><svg class="ic"><use href="#t-sur"/></svg><span>Survey</span></li>
                    </ul>
                    <div class="vscroll"><i></i></div>
                    <div class="hscroll"><i></i></div>
                </div>
                <div class="list_box">
                    <div class="list_clip">
                        <table class="list">
                            <colgroup><col class="c1"><col class="c2"><col class="c3"><col class="c4"><col></colgroup>
                            <thead><tr><th>Name</th><th>Horizontal ...</th><th>Vertical Bas...</th><th>Frequen...</th><th>Target</th></tr></thead>
                            <tbody>
                                <tr><td><div class="name"><svg class="ic"><use href="#t-base"/></svg><svg class="fl"><use href="#flag"/></svg>BL - Path -</div></td><td>Path</td><td>Layout (2)</td><td><button class="dots" aria-label="Edit frequency">···</button></td><td></td></tr>
                                <tr><td></td><td></td><td></td><td></td><td></td></tr>
                                <tr><td></td><td></td><td></td><td></td><td></td></tr>
                                <tr><td></td><td></td><td></td><td></td><td></td></tr>
                                <tr><td></td><td></td><td></td><td></td><td></td></tr>
                                <tr><td></td><td></td><td></td><td></td><td></td></tr>
                                <tr><td></td><td></td><td></td><td></td><td></td></tr>
                                <tr><td></td><td></td><td></td><td></td><td></td></tr>
                                <tr><td></td><td></td><td></td><td></td><td></td></tr>
                                <tr><td></td><td></td><td></td><td></td><td></td></tr>
                                <tr><td></td><td></td><td></td><td></td><td></td></tr>
                                <tr><td></td><td></td><td></td><td></td><td></td></tr>
                                <tr><td></td><td></td><td></td><td></td><td></td></tr>
                                <tr><td></td><td></td><td></td><td></td><td></td></tr>
                                <tr><td></td><td></td><td></td><td></td><td></td></tr>
                                <tr><td></td><td></td><td></td><td></td><td></td></tr>
                                <tr><td></td><td></td><td></td><td></td><td></td></tr>
                                <tr><td></td><td></td><td></td><td></td><td></td></tr>
                                <tr><td></td><td></td><td></td><td></td><td></td></tr>
                                <tr><td></td><td></td><td></td><td></td><td></td></tr>
                            </tbody>
                        </table>
                    </div>
                    <div class="hscroll long"><i></i></div>
                </div>
            </div>
            <nav class="ts_tabs">
                <button class="on"><span>Prospector</span></button>
                <button><span>Settings</span></button>
                <button><span>Survey</span></button>
                <button><span>Toolbox</span></button>
            </nav>
        </aside>

        <div class="right">
            <div class="stage">
                <div class="canvas">
                    <svg class="drawing" viewBox="286 125 966 463" preserveAspectRatio="xMinYMin meet">
                        <path d="M544 588l-8-76v-34l14-34 30-61 4-14-12-77h10v-25l22-1 5 4-1 30 7 52v36l-7 20-38 76 2 40 8 74z" fill="#676869"/>
                        <g fill="none" stroke="#787a7a">
                            <path d="M584 284l22-8M576 303l25 11M580 345q16-2 26-14M580 340l20 6M586 384l24-6M566 425l32-13M560 436l30-8M556 444l28 2M544 494l24 4M583 275l18 10M588 318l14-6M550 577l24-6M574 298l12-2M590 273l12-3"/>
                        </g>
                        <path d="M594 311h1M606 381h1M600 348h1M587 417h1M606 401h1M566 452h1M575 466h1M545 488h1M540 516h1M564 500h1M548 534h1M562 549h1M545 559h1M599 335h1" stroke="#333b3d"/>
                        <path d="M544 588l-8-76v-34l14-34 30-61 4-14-12-77h10v-25l22-1 5 4-1 30 7 52v36l-7 20-38 76 2 40 8 74" fill="none" stroke="#2fb98d"/>
                        <g fill="none" stroke="#bcbfc0">
                            <path d="M582 291l5-1 10 6 3 3 8 5"/>
                            <path d="M613 354h-11l-1-2h-12l-2 8 6 5 4-1 3 3 6 5M588 360l12 6M602 354v5l6 10-4-3M584 366h7v2l-6 3v4l11 7v3l-3 7-1 7 8 6M581 397l3 8M593 403l7 4"/>
                            <path d="M588 448h-12l-1 2h-4l-1-3h-7l-4 7h-5l-1 4h-6l-2 7-4 4-2 8-3 2 1-6 3-2"/>
                            <path d="M541 493l4-1 1 4M563 484l5-2v4M565 494v5M557 557l2 8h4l5-4 2 6M558 569h7l6-2M560 571v8l6 2 5-2 3 2M565 559l2 8-4 8M571 577v-7"/>
                            <circle cx="587" cy="389" r="1.500"/>
                        </g>
                        <path d="M571 270l8 15 2 4" stroke="#31552f" fill="none"/>
                        <path d="M632 280l-26 12-12 12M587 300l10 1 2 4-8 2-4-4z" fill="none" stroke="#bb2f43" stroke-dasharray="6 1"/>
                        <path d="M632.500 246v66M600 279.500h66" stroke="#e6e8ea"/>
                        <path d="M297.500 542v34M298 575.500h35" stroke="#d5d8db" fill="none"/>
                        <path d="M294.500 572.500h6v6h-6z" stroke="#d5d8db" fill="none"/>
                        <text x="299" y="538">Y</text>
                        <text x="335" y="575">X</text>
                    </svg>
                    <div class="view_label"><span>[−][Top][2D Wireframe]</span>
                        <div class="view_btns">
                            <button aria-label="Minimize view"><svg class="ic8"><use href="#min"/></svg></button>
                            <button aria-label="Restore view"><svg class="ic8"><use href="#restore"/></svg></button>
                            <button aria-label="Close view"><svg class="ic8"><use href="#close"/></svg></button>
                        </div>
                    </div>
                    <div class="tip">Station:11+718.45m</div>
                </div>
                <div class="dock">
                    <div class="dock_set">
                        <i class="dgrip"></i>
                        <button aria-label="Tool 1"><svg class="ic"><use href="#v1"/></svg></button>
                        <button aria-label="Tool 2"><svg class="ic"><use href="#v2"/></svg></button>
                        <button aria-label="Tool 3"><svg class="ic"><use href="#v3"/></svg></button>
                        <button aria-label="Tool 4"><svg class="ic"><use href="#v4"/></svg></button>
                        <button aria-label="Tool 5"><svg class="ic"><use href="#v5"/></svg></button>
                        <button aria-label="Tool 6"><svg class="ic"><use href="#v6"/></svg></button>
                        <button aria-label="Tool 7"><svg class="ic"><use href="#v7"/></svg></button>
                        <button aria-label="Tool 8"><svg class="ic"><use href="#v8"/></svg></button>
                        <button aria-label="Tool 9"><svg class="ic"><use href="#v9"/></svg></button>
                        <button aria-label="Tool 10"><svg class="ic"><use href="#v10"/></svg></button>
                        <button aria-label="Tool 11"><svg class="ic"><use href="#v11"/></svg></button>
                        <button aria-label="Tool 12"><svg class="ic"><use href="#v4"/></svg></button>
                        <button aria-label="Tool 13"><svg class="ic"><use href="#v12"/></svg></button>
                        <i class="dsep"></i>
                        <button aria-label="Tool 14"><svg class="ic"><use href="#v10"/></svg></button>
                        <i class="dsep"></i>
                        <button aria-label="Tool 15"><svg class="ic"><use href="#v12"/></svg></button>
                        <button aria-label="Tool 16"><svg class="ic"><use href="#v19"/></svg></button>
                        <button aria-label="Tool 17"><svg class="ic"><use href="#v8"/></svg></button>
                        <i class="dsep"></i>
                        <button aria-label="Tool 18"><svg class="ic"><use href="#v13"/></svg></button>
                        <button aria-label="Tool 19"><svg class="ic"><use href="#v14"/></svg></button>
                        <button aria-label="Tool 20"><svg class="ic"><use href="#v2"/></svg></button>
                        <button aria-label="Tool 21"><svg class="ic"><use href="#v15"/></svg></button>
                        <button aria-label="Tool 22"><svg class="ic"><use href="#v16"/></svg></button>
                        <button aria-label="Tool 23"><svg class="ic"><use href="#v17"/></svg></button>
                        <button aria-label="Tool 24"><svg class="ic"><use href="#v18"/></svg></button>
                    </div>
                    <div class="dock_set">
                        <i class="dgrip"></i>
                        <button aria-label="Tool 25"><svg class="ic"><use href="#v10"/></svg></button>
                        <button aria-label="Tool 26"><svg class="ic"><use href="#v5"/></svg></button>
                        <button aria-label="Tool 27"><svg class="ic"><use href="#v8"/></svg></button>
                    </div>
                </div>
            </div>
            <div class="command">
                <div class="cmd_side">
                    <i class="cmd_grip"></i>
                    <button aria-label="Close command line"><svg class="ic8"><use href="#close"/></svg></button>
                    <button aria-label="Customize command line"><svg class="ic"><use href="#wrench"/></svg></button>
                </div>
                <div class="cmd_main">
                    <div class="history">
                        <p>2 of the monitored system variables have changed from the preferred value. Use SYSVARMONITOR command to view changes.</p>
                        <p>Automatic save to C:\Users\chris\AppData\Local\Temp\GRADING_1_9035_ba00f812.sv$ ...</p>
                        <p>Command:</p>
                        <p>**** System Variable Changed ****</p>
                        <p>1 of the monitored system variables has changed from the preferred value. Use SYSVARMONITOR command to view changes.</p>
                        <p>Command: *Cancel*</p>
                        <p>Command:</p>
                        <p>Command:</p>
                    </div>
                    <div class="prompt">
                        <svg class="ic"><use href="#t-corr"/></svg><i class="caret dark"></i>
                        <label for="cmd"><b>EDITCORRIDORPROPERTIES</b> Specify station along baseline:</label>
                        <input id="cmd" type="text">
                    </div>
                </div>
            </div>
        </div>
    </main>

    <footer class="status">
        <nav class="layouts">
            <button class="on">Model</button>
            <button>Layout1</button>
            <button>Layout2</button>
            <button aria-label="New layout"><svg class="ic8"><use href="#plus"/></svg></button>
        </nav>
        <div class="st">
            <span class="coords">700273.571, 2710949.288, 0.000</span>
            <i class="ssep"></i>
            <button>MODEL</button>
            <i class="ssep"></i>
            <button aria-label="Grid"><svg class="ic"><use href="#grid"/></svg></button>
            <button class="drop" aria-label="Snap"><svg class="ic"><use href="#snap"/></svg><i class="caret big"></i></button>
            <i class="ssep"></i>
            <button aria-label="Dynamic input"><svg class="ic"><use href="#dyn"/></svg></button>
            <button aria-label="Ortho"><svg class="ic"><use href="#ortho"/></svg></button>
            <button class="act" aria-label="Polar"><svg class="ic"><use href="#polar"/></svg></button>
            <i class="caret big"></i>
            <button class="drop" aria-label="Isodraft"><svg class="ic"><use href="#iso"/></svg><i class="caret big"></i></button>
            <button class="act" aria-label="Tracking"><svg class="ic"><use href="#track"/></svg></button>
            <button class="drop" aria-label="Object snap"><svg class="ic"><use href="#osnap"/></svg><i class="caret big"></i></button>
            <i class="ssep"></i>
            <button class="act" aria-label="Annotation visibility"><svg class="ic"><use href="#ann2"/></svg></button>
            <button aria-label="Auto scale"><svg class="ic"><use href="#ann3"/></svg></button>
            <button aria-label="Annotation"><svg class="ic"><use href="#ann"/></svg></button>
            <button class="drop">1:1000<i class="caret big"></i></button>
            <i class="ssep"></i>
            <button class="drop" aria-label="Workspace switching"><svg class="ic"><use href="#gear"/></svg><i class="caret big"></i></button>
            <button aria-label="Annotation monitor"><svg class="ic"><use href="#plus"/></svg></button>
            <i class="ssep"></i>
            <button aria-label="Elevation"><svg class="ic"><use href="#elev"/></svg></button>
            <button>3.500</button>
            <i class="ssep"></i>
            <button aria-label="Isolate objects"><svg class="ic"><use href="#shapes"/></svg></button>
            <button class="act" aria-label="Graphics performance"><svg class="ic"><use href="#perf"/></svg></button>
            <button aria-label="Survey toggle"><svg class="ic"><use href="#s1"/></svg></button>
            <button aria-label="Coordinates"><svg class="ic"><use href="#s2"/></svg></button>
            <button aria-label="Variables"><svg class="ic"><use href="#s3"/></svg></button>
            <button aria-label="Monitor"><svg class="ic"><use href="#s4"/></svg></button>
            <i class="ssep"></i>
            <button aria-label="Clean screen"><svg class="ic"><use href="#full"/></svg></button>
            <button aria-label="Customization"><svg class="ic"><use href="#menu"/></svg></button>
        </div>
    </footer>
</div>
</body>
</html>
```

FILE: styles.css
```css
*{
    margin:0;
    padding:0;
    box-sizing:border-box;
}
body{
    height:100vh;
    padding:4px 0 5px;
    background:#000;
    font:8px/12px "Open Sans","Noto Sans",sans-serif;
    color:#dfe2e7;
    overflow:hidden;
}
ul,li{
    list-style:none;
}
button,input,select{
    border:0;
    background:none;
    color:inherit;
    font:inherit;
    outline:none;
    appearance:none;
}
button{
    display:flex;
    align-items:center;
    white-space:nowrap;
    flex:none;
}
select{
    flex:1;
    min-width:0;
}
h1,h2{
    font-size:8px;
    font-weight:400;
}
i{
    flex:none;
}
.sprite{
    display:none;
}
.ic{
    width:12px;
    height:12px;
    flex:none;
}
.ic8{
    width:8px;
    height:8px;
    flex:none;
}
.ic24{
    width:24px;
    height:24px;
    flex:none;
}
/* icon paint */
.lt{ fill:#dde0e4; }
.ls{ fill:none; stroke:#dde0e4; }
.bf{ fill:#7dbbe4; }
.bs{ fill:none; stroke:#74b1dc; }
.yf{ fill:#efc872; }
.bg{ fill:#4a5260; }
.dk{ fill:#77776f; }
.ds{ fill:none; stroke:#777; }

.caret{
    border:2px solid transparent;
    border-top-color:#c9cdd4;
    border-bottom:0;
}
.caret.big{
    border-width:3px;
    border-bottom:0;
}
.caret.dark{
    border-top-color:#555;
}
.caret_right{
    border:3px solid transparent;
    border-left-color:#dfe2e7;
    border-right:0;
}

.app{
    height:100%;
    display:flex;
    flex-direction:column;
    background:#212832;
    border-top:1px solid #1f6c88;
    border-left:2px solid #24627f;
    border-right:2px solid #1e7bb0;
    border-bottom:2px solid #15191f;
}

/* title bar and menu */
.top{
    display:flex;
    height:33px;
    flex:none;
}
.logo{
    width:28px;
    height:29px;
    margin:2px 5px 0 1px;
    background:linear-gradient(#dfe1e3,#8e959c);
    border:1px solid #aeb3b8;
}
.logo svg{
    width:100%;
    height:100%;
}
.top_rows{
    flex:1;
    min-width:0;
    display:flex;
    flex-direction:column;
}
.titlebar{
    height:19px;
    display:flex;
    align-items:center;
}
.qat{
    display:flex;
    gap:4px;
    padding-right:7px;
}
.drop{
    gap:4px;
}
.workspace{
    display:flex;
    align-items:center;
    width:122px;
    height:13px;
    gap:2px;
    padding:0 2px;
    margin-right:4px;
    background:#3b4557;
}
.title{
    flex:1;
    display:flex;
    gap:10px;
    justify-content:center;
    padding-left:4px;
}
.infocenter{
    display:flex;
    align-items:center;
    gap:4px;
}
.search{
    width:122px;
    height:13px;
    padding:0 3px;
    background:#465060;
}
.search::placeholder{
    color:#b9bec7;
    font-style:italic;
}
.bar{
    width:1px;
    height:12px;
    margin:0 2px;
    background:#454d5b;
}
.winbtns{
    display:flex;
    gap:5px;
    padding:0 4px 0 44px;
}
.menu{
    flex:1;
    display:flex;
    justify-content:space-between;
    padding-right:43px;
}
.menu button{
    padding:0 4px;
    color:#c3c7ce;
}
.menu .on{
    padding:0 6px;
    background:#3b4454;
    color:#f2f3f5;
}
.menu .collapse{
    gap:3px;
}
.chip{
    width:10px;
    height:6px;
    background:#eceef0;
}

/* ribbon */
.ribbon{
    display:grid;
    grid-template-columns:78px 89px 221px 91px 81px 172px 187px 1fr;
    height:66px;
    flex:none;
    margin:0 2px 0 1px;
    background:#3b4454;
}
.panel{
    display:flex;
    flex-direction:column;
    border-right:1px solid #2c3340;
    padding-top:2px;
    min-width:0;
}
.clipboard{
    border-right:0;
}
.tools{
    height:51px;
    display:flex;
}
.panel h2{
    display:flex;
    align-items:center;
    justify-content:center;
    gap:4px;
    white-space:nowrap;
}
.col{
    display:grid;
    grid-template-rows:repeat(3,1fr);
}
.col button{
    gap:4px;
}
.large{
    flex-direction:column;
    justify-content:center;
    line-height:10px;
}
.palettes .tools{
    padding:0 1px;
}
.palettes .large{
    width:41px;
}
.lit{
    background:#3a5a74;
    border:1px solid #5f9cc6;
}
.pal_grid{
    flex:1;
    display:grid;
    grid-template-columns:1fr 1fr;
    grid-template-rows:repeat(3,1fr);
    padding-left:1px;
}
.pal_grid button{
    justify-content:center;
}
.ground .tools{
    padding-left:17px;
}
.design .tools{
    display:grid;
    grid-template-columns:72px 67px 1fr;
    padding-left:4px;
}
.views .tools{
    padding-left:7px;
}
.draw .tools{
    display:grid;
    grid-template-columns:repeat(3,27px);
    padding-left:4px;
}
.draw button{
    gap:3px;
}
.modify .tools{
    display:grid;
    grid-template-columns:49px 49px 50px 1fr;
    padding-left:4px;
}
.modify .col button{
    gap:3px;
}
.modify .wide .caret{
    margin-left:auto;
}
.modify .wide{
    padding-right:10px;
}
.layers .large{
    width:42px;
}
.layer_rows{
    flex:1;
    display:grid;
    grid-template-rows:repeat(3,1fr);
}
.layer_combo{
    display:flex;
    align-items:center;
    gap:2px;
    padding:0 3px;
    margin:1px 0;
    background:#46546a;
}
.layer_combo .ic{
    width:11px;
    height:11px;
}
.swatch{
    width:9px;
    height:9px;
    background:#fff;
}
.layer_row{
    display:flex;
    gap:4px;
    padding-left:3px;
}
.layer_row button{
    gap:4px;
}
.clipboard .tools{
    padding-left:2px;
    gap:3px;
}
.clipboard .large{
    width:34px;
}
.clipboard h2{
    justify-content:flex-start;
    padding-left:10px;
}

/* drawing tabs */
.files{
    display:flex;
    align-items:flex-end;
    height:19px;
    flex:none;
    padding-left:15px;
    border-bottom:1px solid #3b4454;
}
.file{
    width:85px;
    height:15px;
    padding:0 8px;
    justify-content:space-between;
    border-radius:5px 5px 0 0;
    background:#2a303c;
    color:#bfc4cc;
}
.file.on{
    background:#3b4454;
    color:#f0f1f3;
}
.add{
    height:14px;
    padding:0 8px;
}

/* work area */
.work{
    flex:1;
    min-height:0;
    display:flex;
    background:#3b4454;
}
.toolspace{
    display:flex;
    width:284px;
    padding-top:2px;
}
.ts_main{
    flex:1;
    min-width:0;
    display:flex;
    flex-direction:column;
    padding:0 0 2px 1px;
}
.ts_title{
    display:flex;
    align-items:center;
    gap:4px;
    height:15px;
    padding-left:4px;
    background:#2b313d;
    color:#d3d7dd;
}
.grip{
    width:2px;
    height:6px;
    background:#6d7583;
}
.ts_bar{
    height:22px;
    display:flex;
    align-items:center;
    gap:6px;
    padding:0 4px 0 3px;
}
.grow{
    flex:1;
}
.view_sel{
    display:flex;
    align-items:center;
    height:14px;
    padding:0 2px;
    background:#fff;
    color:#111;
}
.view_sel svg{
    width:8px;
    height:8px;
}
.tree_box{
    height:205px;
    margin:2px 0 6px;
    display:grid;
    grid-template-columns:1fr 13px;
    grid-template-rows:1fr 12px;
    background:#f1f1f1;
    color:#111;
}
.tree{
    display:flex;
    flex-direction:column;
    background:
        linear-gradient(#b5b5b5,#b5b5b5) 10px 0/1px 100% no-repeat,
        linear-gradient(#c4c4c4,#c4c4c4) 22px 0/1px 100% no-repeat,
        #fff;
}
.tree li{
    flex:1;
    display:flex;
    align-items:center;
    padding-left:19px;
}
.tree em{
    width:7px;
    height:7px;
    margin-right:4px;
    background:linear-gradient(#b5b5b5,#b5b5b5) 4px 3px/3px 1px no-repeat;
}
.tree .plus,.tree .minus{
    border:1px solid #999;
    background:linear-gradient(#444,#444) 1px 2px/3px 1px no-repeat,#fff;
}
.tree .plus{
    background:linear-gradient(#444,#444) 1px 2px/3px 1px no-repeat,linear-gradient(#444,#444) 2px 1px/1px 3px no-repeat,#fff;
}
.tree span{
    padding-left:4px;
}
.tree .sub{
    padding-left:32px;
}
.fl{
    width:5px;
    height:5px;
    flex:none;
    align-self:flex-start;
    margin:2px 8px 0 1px;
}
.tree .sel{
    flex:1;
    background:#9d9d9d;
}
.vscroll{
    display:flex;
    justify-content:center;
    align-items:flex-start;
    padding-top:38px;
}
.vscroll i{
    width:2px;
    height:85px;
    background:#8a8a8a;
}
.hscroll{
    grid-column:1/-1;
    height:12px;
    display:flex;
    align-items:center;
    padding-left:12px;
    background:#f1f1f1;
}
.hscroll i{
    width:70%;
    height:2px;
    background:#8a8a8a;
}
.list_box{
    flex:1;
    min-height:0;
    display:flex;
    flex-direction:column;
    background:#fff;
    color:#111;
}
.list_clip{
    flex:1;
    min-height:0;
    overflow:hidden;
}
.list{
    width:100%;
    height:calc(100% + 4px);
    table-layout:fixed;
    border-collapse:collapse;
}
.c1{ width:69px; }
.c2{ width:55px; }
.c3{ width:55px; }
.c4{ width:45px; }
.list th{
    height:16px;
    padding-left:5px;
    font-weight:400;
    text-align:left;
    white-space:nowrap;
    border-right:1px solid #e2e2e2;
}
.list td{
    height:13px;
    padding-left:2px;
    line-height:10px;
    border-right:1px solid #e9cdc0;
    border-bottom:1px solid #9aa6ae;
}
.list tbody tr{
    background:#fffee8;
}
.list tbody tr:nth-child(6n+4),
.list tbody tr:nth-child(6n+5),
.list tbody tr:nth-child(6n+6){
    background:#d5fdd3;
}
.list tbody tr:first-child{
    background:#fff;
}
.list .name{
    display:flex;
    align-items:center;
    height:10px;
    white-space:nowrap;
    overflow:hidden;
}
.list .name .fl{
    margin-top:0;
    margin-right:6px;
}
.dots{
    width:11px;
    height:10px;
    margin-left:auto;
    justify-content:center;
    border:1px solid #777;
}
.list_box .long i{
    width:90%;
}
.ts_tabs{
    width:16px;
    padding-top:17px;
}
.ts_tabs button{
    width:14px;
    height:83px;
    justify-content:center;
    background:#2b313d;
    border-bottom:1px solid #3b4454;
    border-radius:0 3px 3px 0;
    color:#a9afb9;
}
.ts_tabs .on{
    background:#3b4454;
    color:#dfe2e7;
}
.ts_tabs span{
    writing-mode:vertical-rl;
    transform:rotate(180deg);
}

.right{
    flex:1;
    min-width:0;
    display:flex;
    flex-direction:column;
}
.stage{
    flex:1;
    min-height:0;
    display:flex;
    padding-top:1px;
}
.canvas{
    position:relative;
    flex:1;
    overflow:hidden;
    background:#212830;
}
.drawing{
    position:absolute;
    inset:0;
    width:100%;
    height:100%;
}
.drawing text{
    font:300 12px/12px "Open Sans",sans-serif;
    fill:#d5d8db;
}
.view_label{
    position:relative;
    display:flex;
    align-items:center;
    justify-content:space-between;
    padding:5px 7px 0 2px;
}
.view_btns{
    display:flex;
    gap:6px;
}
.tip{
    position:absolute;
    left:359px;
    top:172px;
    padding:0 1px;
    border:1px solid #555;
    background:#fffff0;
    color:#111;
    line-height:11px;
}
.dock{
    width:24px;
    padding:0 3px 0 2px;
}
.dock_set{
    display:flex;
    flex-direction:column;
    align-items:center;
    border:1px solid #2b313d;
    background:#363e4d;
}
.dock_set button{
    height:15px;
}
.dgrip{
    width:10px;
    height:2px;
    margin:3px 0 1px;
    background:#6f7683;
}
.dsep{
    width:13px;
    height:1px;
    margin:2px 0;
    background:#d4d7db;
}
.command{
    display:flex;
    height:104px;
    padding:1px 0;
    background:#2b313d;
}
.cmd_side{
    width:17px;
    display:flex;
    flex-direction:column;
    align-items:center;
    gap:5px;
    padding:3px 3px 0 0;
}
.cmd_grip{
    width:11px;
    height:4px;
    background:repeating-linear-gradient(90deg,#c3c7cd 0 1px,transparent 1px 2px);
}
.cmd_main{
    flex:1;
    min-width:0;
    display:flex;
    flex-direction:column;
    font-family:"DejaVu Sans Mono",monospace;
    color:#111;
}
.history{
    flex:1;
    display:grid;
    grid-template-rows:repeat(8,1fr);
    padding:6px 0 1px 1px;
    background:#c8c8c8;
    white-space:nowrap;
}
.history p{
    line-height:10px;
}
.prompt{
    height:13px;
    display:flex;
    align-items:center;
    gap:3px;
    padding-left:3px;
    border-top:1px solid #444;
    background:#fff;
}
.prompt .ic{
    height:10px;
}
.prompt input{
    flex:1;
    min-width:0;
    height:11px;
}

/* status bar */
.status{
    display:flex;
    justify-content:space-between;
    height:20px;
    flex:none;
}
.layouts{
    display:flex;
    gap:3px;
    padding-left:10px;
}
.layouts button{
    height:13px;
    padding:0 6px;
    border-radius:0 0 5px 5px;
    background:#2a303c;
    color:#bfc4cc;
}
.layouts .on{
    background:#3b4454;
    color:#fff;
    font-weight:700;
}
.st{
    width:52%;
    display:flex;
    align-items:center;
    justify-content:space-between;
    padding:0 4px 0 4px;
    background:#343b4a;
}
.st .drop{
    gap:5px;
}
.st .act{
    height:17px;
    padding:0 2px;
    background:#5b8fc0;
}
.ssep{
    width:1px;
    height:100%;
    background:#212832;
}
```
